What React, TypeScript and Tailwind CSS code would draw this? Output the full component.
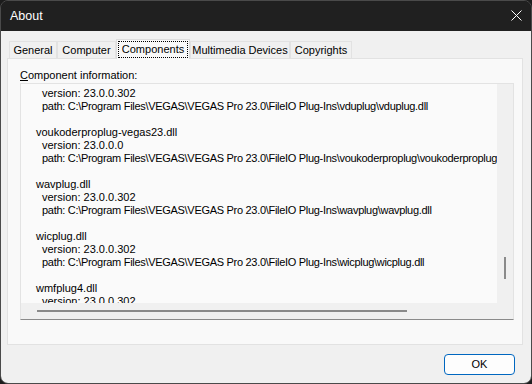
import React from 'react';

const font = { fontFamily: '"Liberation Sans", Arial, sans-serif' };

interface Tab {
  label: string;
  width: string;
}

const tabs: Tab[] = [
  { label: 'General', width: 'w-[48px]' },
  { label: 'Computer', width: 'w-[59px]' },
  { label: 'Components', width: 'w-[74px]' },
  { label: 'Multimedia Devices', width: 'w-[100px]' },
  { label: 'Copyrights', width: 'w-[62px]' },
];

const base = 'C:\\Program Files\\VEGAS\\VEGAS Pro 23.0\\FileIO Plug-Ins\\';

const components = [
  { name: 'vduplug.dll', version: '23.0.0.302', path: base + 'vduplug\\vduplug.dll' },
  { name: 'voukoderproplug-vegas23.dll', version: '23.0.0.0', path: base + 'voukoderproplug\\voukoderproplug-vegas23.dll' },
  { name: 'wavplug.dll', version: '23.0.0.302', path: base + 'wavplug\\wavplug.dll' },
  { name: 'wicplug.dll', version: '23.0.0.302', path: base + 'wicplug\\wicplug.dll' },
  { name: 'wmfplug4.dll', version: '23.0.0.302', path: base + 'wmfplug4\\wmfplug4.dll' },
];

export default function App() {
  const active = 'Components';

  return (
    <div className="w-[532px] h-[384px] bg-[#1c1c1c] text-black" style={font}>
      <div className="w-full h-full flex flex-col rounded-[8px] overflow-hidden border border-[#4a4a4a]">
        {/* Title bar */}
        <div className="h-[30px] shrink-0 bg-[#202020] flex items-center justify-between pl-[9px] pr-[9px]">
          <span className="text-white text-[12.5px]">About</span>
          <svg width="11" height="11" viewBox="0 0 11 11" className="mb-[1px]">
            <path d="M0.5 0.5 L10.5 10.5 M10.5 0.5 L0.5 10.5" stroke="#ffffff" strokeWidth="1" />
          </svg>
        </div>

        {/* Body */}
        <div className="flex-1 bg-[#f0f0f0] flex flex-col pl-[6px] pr-[8px] pt-[8px] pb-[8px]">
          {/* Tab strip */}
          <div className="flex items-end pl-[2px] h-[19px] relative z-10">
            {tabs.map(t =>
              t.label === active ? (
                <div
                  key={t.label}
                  className={`${t.width} h-[20px] -mb-[1px] bg-[#f9f9f9] border border-b-0 border-[#dcdcdc] flex p-[1px]`}
                >
                  <div className="flex-1 border border-dotted border-black flex items-center justify-center text-[11px] leading-none pb-[1px]">
                    {t.label}
                  </div>
                </div>
              ) : (
                <div
                  key={t.label}
                  className={`${t.width} h-[17px] bg-[#f0f0f0] border border-b-0 border-[#e2e2e2] flex items-center justify-center text-[11px] leading-none pt-[1px]`}
                >
                  {t.label}
                </div>
              )
            )}
          </div>

          {/* Tab panel */}
          <div className="h-[287px] bg-[#f9f9f9] border border-[#e2e2e2] flex flex-col pl-[12px] pr-[8px] pt-[10px]">
            <div className="text-[11px] leading-[13px] h-[13px]">
              <span className="underline underline-offset-[1px]">C</span>omponent information:
            </div>

            {/* List box */}
            <div className="mt-[1px] h-[237px] flex flex-col border border-[#e3e3e3] border-b-[#8a8a8a] bg-[#fafafa]">
              <div className="flex flex-1 min-h-0">
                <div className="flex-1 min-w-0 pt-[3px] flex flex-col">
                  <div className="flex-1 min-h-0 overflow-hidden pl-[15px]">
                    <div className="-mt-[13px] text-[11px] leading-[13px] whitespace-nowrap">
                      {components.map(c => (
                        <div key={c.name}>
                          <div>{c.name}</div>
                          <div className="pl-[6px]">version: {c.version}</div>
                          <div className="pl-[6px] tracking-[-0.3px]">path: {c.path}</div>
                          <div className="h-[13px]" />
                        </div>
                      ))}
                    </div>
                  </div>
                </div>
                {/* vertical scrollbar */}
                <div className="w-[16px] bg-[#f0f0f0] flex flex-col items-center pt-[173px]">
                  <div className="w-[2px] h-[22px] bg-[#8a8a8a]" />
                </div>
              </div>
              {/* horizontal scrollbar */}
              <div className="h-[16px] shrink-0 bg-[#f0f0f0] flex items-center pl-[16px]">
                <div className="w-[370px] h-[2px] bg-[#8a8a8a]" />
              </div>
            </div>
          </div>

          {/* Buttons */}
          <div className="flex justify-end pt-[9px] pr-[8px]">
            <button className="w-[71px] h-[21px] rounded-[4px] border border-[#0067c0] bg-[#fdfdfd] text-[11px] leading-none flex items-center justify-center">
              OK
            </button>
          </div>
        </div>
      </div>
    </div>
  );
}
